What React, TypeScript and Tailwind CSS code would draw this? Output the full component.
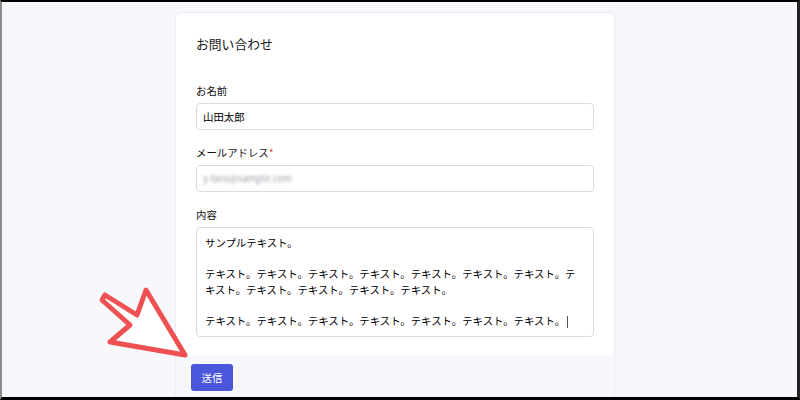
import React from 'react';

const font = '[font-family:"Noto_Sans_CJK_JP","Noto_Sans",sans-serif]';

const lines = [
  'サンプルテキスト。',
  '',
  'テキスト。テキスト。テキスト。テキスト。テキスト。テキスト。テキスト。テキスト。テキスト。テキスト。テキスト。テキスト。',
  '',
  'テキスト。テキスト。テキスト。テキスト。テキスト。テキスト。テキスト。',
];

// red outlined arrow pointing at the submit button
const Arrow: React.FC = () => (
  <svg
    className="absolute left-[80px] top-[270px]"
    width="120"
    height="100"
    viewBox="80 270 120 100"
  >
    <polygon
      points="103,293 135,313 144,288 183,353 108,340 128,323 100,298"
      fill="#ffffff"
      stroke="#ef5152"
      strokeWidth="5"
      strokeLinejoin="round"
    />
  </svg>
);

const App: React.FC = () => {
  return (
    <div
      className={`relative w-[800px] h-[400px] overflow-hidden bg-[#f7f8fc] border-t-2 border-t-black border-l-2 border-l-[#8a8a8a] border-r-[3px] border-r-[#222] border-b-[3px] border-b-black ${font}`}
    >
      <div className="ml-[173px] mt-[10px] w-[440px] bg-white border border-[#eaecf0] rounded-md">
        <div className="px-[20px] pt-[21px] pb-[18px]">
          <h1 className="text-[12.8px] leading-[19px] text-[#1a1a1a]">お問い合わせ</h1>

          <form className="mt-[30px] flex flex-col gap-[15.5px]">
            <div className="flex flex-col gap-[4px]">
              <label className="text-[10.4px] leading-[15.6px] text-[#111]" htmlFor="name">
                お名前
              </label>
              <input
                id="name"
                className="h-[27px] w-full border border-[#d8dbe1] rounded-[4px] px-[6px] text-[10.4px] text-black outline-none"
                defaultValue="山田太郎"
              />
            </div>

            <div className="flex flex-col gap-[4px]">
              <label className="text-[10.4px] leading-[15.6px] text-[#111]" htmlFor="email">
                メールアドレス<span className="text-[#d33a3a]">*</span>
              </label>
              <div className="h-[27px] w-full border border-[#d8dbe1] rounded-[4px] px-[6px] flex items-center">
                {/* address is blurred in the picture */}
                <input
                  id="email"
                  className="w-full bg-transparent text-[9.5px] text-[#9a9da4] blur-[1.5px] outline-none"
                  defaultValue="y-taro@sample.com"
                />
              </div>
            </div>

            <div className="flex flex-col gap-[4px]">
              <label className="text-[10.4px] leading-[15.6px] text-[#111]">内容</label>
              <div className="h-[110px] w-full border border-[#d8dbe1] rounded-[4px] pl-[8px] pr-[8px] py-[7px] text-[10.4px] leading-[15.6px] text-black whitespace-pre-wrap break-all">
                {lines.map((line, i) => (
                  <div key={i} className="min-h-[15.6px]">
                    {line}
                    {i === lines.length - 1 && (
                      <span className="inline-block w-px h-[12px] bg-[#555] align-middle ml-[2px]" />
                    )}
                  </div>
                ))}
              </div>
            </div>
          </form>
        </div>

        <div className="bg-[#f7f8fb] px-[15px] pt-[8px] pb-[20px] rounded-b-md">
          <button
            type="button"
            className="h-[27px] w-[42px] bg-[#4b57db] text-white text-[10.4px] rounded-[3px]"
          >
            送信
          </button>
        </div>
      </div>

      <Arrow />
    </div>
  );
};

export default App;
